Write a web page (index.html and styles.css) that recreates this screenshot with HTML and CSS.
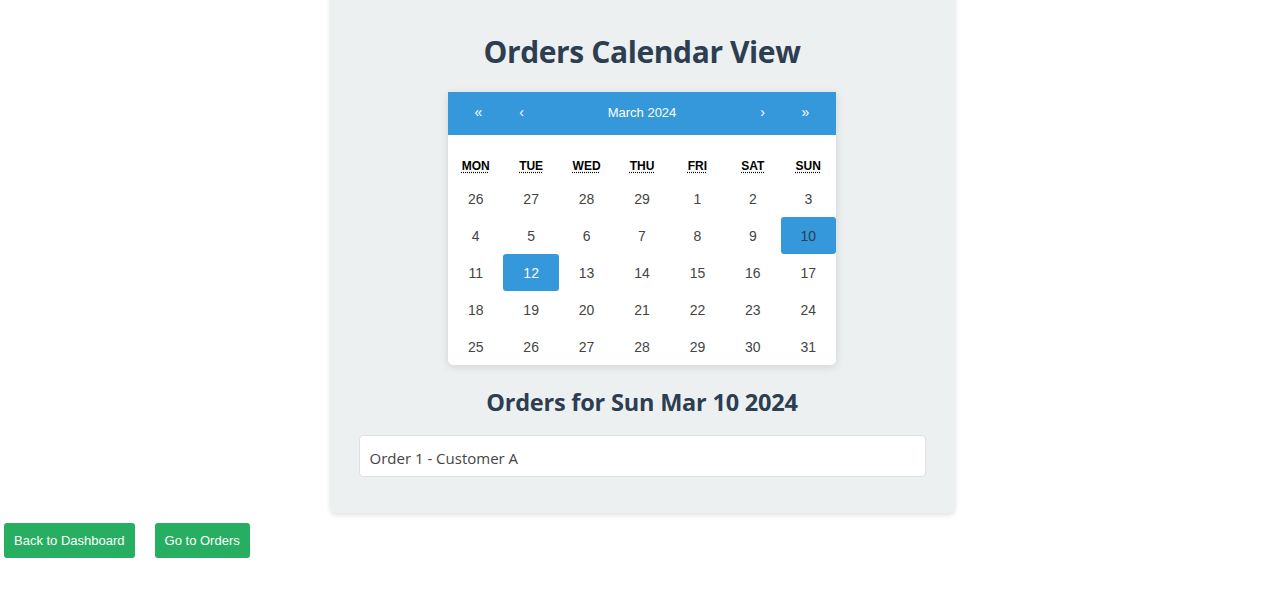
FILE: index.html
```html
<!DOCTYPE html>
<html>
<head>
<meta charset="utf-8">
<link rel="stylesheet" href="styles.css">
</head>
<body>
<div class="page">
  <div class="panel">
    <h1 class="title">Orders Calendar View</h1>
    <div class="calendar">
      <div class="cal-nav">
        <button class="nav-btn">«</button>
        <button class="nav-btn">‹</button>
        <span class="nav-label">March 2024</span>
        <button class="nav-btn">›</button>
        <button class="nav-btn">»</button>
      </div>
      <div class="cal-body">
        <div class="weekdays">
          <div class="wd"><abbr title="Monday">Mon</abbr></div>
          <div class="wd"><abbr title="Tuesday">Tue</abbr></div>
          <div class="wd"><abbr title="Wednesday">Wed</abbr></div>
          <div class="wd"><abbr title="Thursday">Thu</abbr></div>
          <div class="wd"><abbr title="Friday">Fri</abbr></div>
          <div class="wd"><abbr title="Saturday">Sat</abbr></div>
          <div class="wd"><abbr title="Sunday">Sun</abbr></div>
        </div>
        <div class="days">
          <div class="tile">26</div><div class="tile">27</div><div class="tile">28</div><div class="tile">29</div><div class="tile">1</div><div class="tile">2</div><div class="tile">3</div>
          <div class="tile">4</div><div class="tile">5</div><div class="tile">6</div><div class="tile">7</div><div class="tile">8</div><div class="tile">9</div><div class="tile selected">10</div>
          <div class="tile">11</div><div class="tile today">12</div><div class="tile">13</div><div class="tile">14</div><div class="tile">15</div><div class="tile">16</div><div class="tile">17</div>
          <div class="tile">18</div><div class="tile">19</div><div class="tile">20</div><div class="tile">21</div><div class="tile">22</div><div class="tile">23</div><div class="tile">24</div>
          <div class="tile">25</div><div class="tile">26</div><div class="tile">27</div><div class="tile">28</div><div class="tile">29</div><div class="tile">30</div><div class="tile">31</div>
        </div>
      </div>
    </div>
    <h2 class="subtitle">Orders for Sun Mar 10 2024</h2>
    <ul class="orders">
      <li class="order">Order 1 - Customer A</li>
    </ul>
  </div>
  <div class="actions">
    <button class="btn">Back to Dashboard</button>
    <button class="btn">Go to Orders</button>
  </div>
</div>
</body>
</html>
```
FILE: styles.css
```css
html, body {
  margin: 0;
  padding: 0;
  background: #ffffff;
}
body {
  padding-left: 4px;
  font-family: "Open Sans", "Noto Sans", sans-serif;
}
.page {
  display: flex;
  flex-direction: column;
}
.panel {
  width: 625px;
  box-sizing: border-box;
  margin: -10px auto 0;
  padding: 10px 29px 36px 29px;
  background: #ecf0f1;
  border-radius: 0 0 6px 6px;
  box-shadow: 0 2px 5px rgba(0,0,0,0.12);
}
.title {
  margin: 33px 0 21px;
  text-align: center;
  font-size: 30px;
  line-height: 38px;
  font-weight: 700;
  letter-spacing: -0.4px;
  color: #2c3e50;
}
.calendar {
  width: 388px;
  margin: 0 auto;
  background: #fff;
  border-radius: 0 0 5px 5px;
  box-shadow: 0 2px 8px rgba(0,0,0,0.12);
  font-family: "Liberation Sans", Arial, sans-serif;
}
.cal-nav {
  display: flex;
  align-items: center;
  height: 43px;
  box-sizing: border-box;
  padding: 0 9px 3px;
  background: #3498db;
  color: #fff;
}
.nav-btn {
  width: 43px;
  height: 30px;
  border: 0;
  background: transparent;
  color: #fff;
  font-family: "Liberation Sans", Arial, sans-serif;
  font-size: 14px;
  padding: 0;
}
.nav-label {
  flex: 1;
  text-align: center;
  font-size: 13px;
}
.cal-body {
  padding-top: 16px;
}
.weekdays {
  display: grid;
  grid-template-columns: repeat(7, 1fr);
  height: 29px;
}
.wd {
  display: flex;
  align-items: center;
  justify-content: center;
  text-transform: uppercase;
  font-weight: 700;
  font-size: 12px;
  color: #000;
}
.wd abbr {
  text-decoration: underline dotted;
  text-underline-offset: 2px;
}
.days {
  display: grid;
  grid-template-columns: repeat(7, 1fr);
  grid-auto-rows: 37px;
}
.tile {
  display: flex;
  align-items: center;
  justify-content: center;
  font-size: 14px;
  color: #444;
  border-radius: 3px;
}
.tile.selected {
  background: #3498db;
  color: #2c3e50;
}
.tile.today {
  background: #3498db;
  color: #fff;
}
.subtitle {
  margin: 22px 0 18px;
  text-align: center;
  font-size: 23.5px;
  line-height: 30px;
  font-weight: 700;
  letter-spacing: -0.2px;
  color: #2c3e50;
}
.orders {
  list-style: none;
  margin: 0;
  padding: 0;
}
.order {
  background: #fff;
  border: 1px solid #dde1e3;
  border-radius: 4px;
  height: 42px;
  box-sizing: border-box;
  display: flex;
  align-items: center;
  padding: 3px 10px 0;
  font-size: 15px;
  color: #444;
}
.actions {
  display: flex;
  gap: 20px;
  margin-top: 10px;
}
.btn {
  height: 35px;
  padding: 0 10px;
  border: 0;
  border-radius: 3px;
  background: #27ae60;
  color: #fff;
  font-family: "Liberation Sans", Arial, sans-serif;
  font-size: 13px;
}
```
